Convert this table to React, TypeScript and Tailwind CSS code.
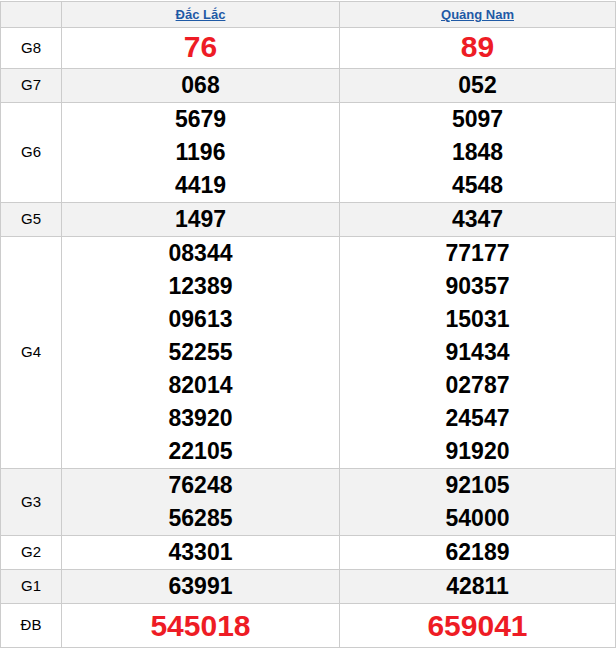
const provinces = ['Đắc Lắc', 'Quảng Nam'];

type Prize = {
  label: string;
  values: [string[], string[]];
  big?: boolean;
};

const prizes: Prize[] = [
  { label: 'G8', values: [['76'], ['89']], big: true },
  { label: 'G7', values: [['068'], ['052']] },
  { label: 'G6', values: [['5679', '1196', '4419'], ['5097', '1848', '4548']] },
  { label: 'G5', values: [['1497'], ['4347']] },
  {
    label: 'G4',
    values: [
      ['08344', '12389', '09613', '52255', '82014', '83920', '22105'],
      ['77177', '90357', '15031', '91434', '02787', '24547', '91920'],
    ],
  },
  { label: 'G3', values: [['76248', '56285'], ['92105', '54000']] },
  { label: 'G2', values: [['43301'], ['62189']] },
  { label: 'G1', values: [['63991'], ['42811']] },
  { label: 'ĐB', values: [['545018'], ['659041']], big: true },
];

export default function App() {
  return (
    <div
      className="w-[616px] h-[648px] bg-white pt-px"
      style={{ fontFamily: '"Liberation Sans", Arial, sans-serif' }}
    >
      <div className="flex flex-col border-l border-t border-[#cccccc]">
        {/* header */}
        <div className="flex bg-[#f2f2f2]">
          <div className="w-[61px] h-[26px] border-r border-b border-[#cccccc]" />
          {provinces.map((p, i) => (
            <div
              key={p}
              className={`${i === 0 ? 'w-[278px]' : 'w-[276px]'} h-[26px] border-r border-b border-[#cccccc] flex items-center justify-center`}
            >
              <a
                href="#"
                className="text-[13px] leading-[25px] font-bold text-[#1f5aa6] underline"
              >
                {p}
              </a>
            </div>
          ))}
        </div>

        {prizes.map((row, r) => (
          <div
            key={row.label}
            className={`flex ${r % 2 === 1 ? 'bg-[#f2f2f2]' : 'bg-white'}`}
          >
            <div className="w-[61px] border-r border-b border-[#cccccc] flex items-center justify-center text-[15px] text-black">
              {row.label}
            </div>
            {row.values.map((col, i) => (
              <div
                key={i}
                className={`${i === 0 ? 'w-[278px]' : 'w-[276px]'} border-r border-b border-[#cccccc] flex flex-col items-center`}
              >
                {col.map((v) =>
                  row.big ? (
                    <span
                      key={v}
                      className={`text-[30px] font-bold text-[#ee1c25] ${row.label === 'ĐB' ? 'leading-[43px]' : 'leading-[38px] pb-[2px]'}`}
                    >
                      {v}
                    </span>
                  ) : (
                    <span key={v} className="text-[23px] leading-[33px] font-bold text-black">
                      {v}
                    </span>
                  ),
                )}
              </div>
            ))}
          </div>
        ))}
      </div>
    </div>
  );
}
